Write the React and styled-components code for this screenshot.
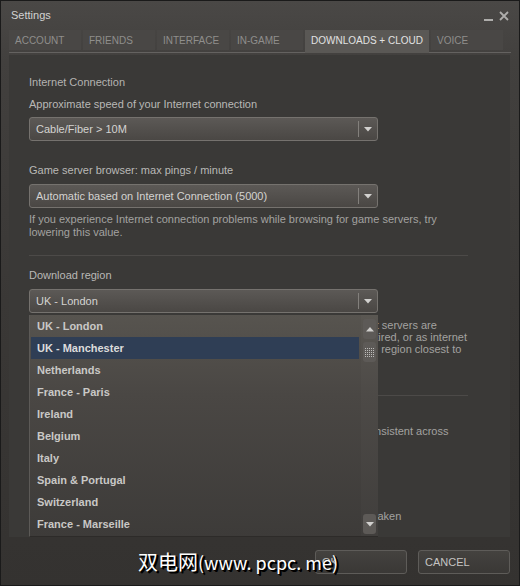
import React from "react";
import styled, { createGlobalStyle } from "styled-components";

const Global = createGlobalStyle`
  html, body { margin: 0; padding: 0; background: #1e1e1e; }
  body { font-family: Arial, "Liberation Sans", sans-serif; }
  * { box-sizing: border-box; }
`;

const Window = styled.div`
  position: relative;
  width: 520px;
  height: 586px;
  display: flex;
  flex-direction: column;
  background: linear-gradient(#4a4846 0px, #42403e 60px, #3a3836 300px, #343230 586px);
  border: 1px solid #1a1a1a;
  font-family: Arial, "Liberation Sans", sans-serif;
  overflow: hidden;
`;

const TitleBar = styled.div`
  height: 28px;
  display: flex;
  align-items: center;
  justify-content: space-between;
  padding: 0 10px 0 10px;
`;

const Title = styled.div`
  color: #d2d2d2;
  font-size: 11px;
`;

const Controls = styled.div`
  display: flex;
  align-items: center;
  gap: 6px;
  margin-top: 2px;
`;

const Tabs = styled.div`
  display: flex;
  gap: 2px;
  margin: 1px 8px 0 8px;
  border-bottom: 1px solid #646260;
  height: 23px;
`;

const Tab = styled.div`
  width: ${p => p.$w}px;
  height: ${p => (p.$active ? 23 : 20)}px;
  display: flex;
  align-items: center;
  padding-left: 6px;
  padding-bottom: ${p => (p.$active ? 2 : 0)}px;
  font-size: 10px;
  color: ${p => (p.$active ? "#e2e2e2" : "#8f8e8c")};
  background: ${p => (p.$active ? "#5a5855" : "#494745")};
  white-space: nowrap;
`;

const Panel = styled.div`
  flex: 1;
  margin: 2px 9px 0 8px;
  background: #3a3937;
  padding: 20px 42px 0 20px;
  display: flex;
  flex-direction: column;
`;

const SectionTitle = styled.div`
  font-size: 11px;
  line-height: 14px;
  color: #b4b3b1;
  margin-bottom: 8px;
`;

const Label = styled.div`
  font-size: 11px;
  line-height: 14px;
  color: #b9b8b6;
  margin-top: ${p => p.$mt || 0}px;
  margin-bottom: ${p => p.$mb ?? 6}px;
`;

const Select = styled.div`
  width: 349px;
  height: 24px;
  border: 1px solid #75726e;
  border-radius: 3px;
  background: linear-gradient(#5c5956, #4a4744);
  display: flex;
  align-items: center;
  color: #d4d3d1;
  font-size: 11px;
  padding-left: 6px;
`;

const SelectText = styled.span`
  flex: 1;
`;

const ArrowBox = styled.div`
  width: 19px;
  height: 16px;
  border-left: 1px solid #83807c;
  display: flex;
  align-items: center;
  justify-content: center;
`;

const Help = styled.div`
  font-size: 11px;
  line-height: ${p => p.$lh || 13}px;
  color: #a3a2a0;
  margin-top: ${p => p.$mt || 0}px;
  white-space: ${p => (p.$nowrap ? "nowrap" : "normal")};
`;

const Divider = styled.div`
  height: 1px;
  background: #4c4a48;
  margin-top: ${p => p.$mt}px;
`;

const RegionWrap = styled.div`
  position: relative;
  width: 349px;
`;

const List = styled.div`
  position: absolute;
  left: 0;
  top: 26px;
  width: 349px;
  height: 222px;
  background: linear-gradient(#57544f 0px, #4a4744 80px, #3d3b39 222px);
  border-left: 1px solid #5c5a57;
  border-bottom: 1px solid #2d2b29;
  z-index: 2;
  display: flex;
`;

const Items = styled.div`
  flex: 1;
  padding-left: 1px;
`;

const Item = styled.div`
  height: 22px;
  display: flex;
  align-items: center;
  padding-left: 6px;
  font-size: 11px;
  font-weight: bold;
  color: ${p => (p.$sel ? "#dcdcdc" : "#c9c8c6")};
  background: ${p => (p.$sel ? "#2f3e55" : "transparent")};
  margin-right: 2px;
`;

const ScrollCol = styled.div`
  width: 17px;
  display: flex;
  flex-direction: column;
  align-items: center;
  padding: 4px 0 2px;
  background: rgba(255, 255, 255, 0.02);
`;

const ScrollBtn = styled.div`
  width: 13px;
  height: 20px;
  border-radius: 3px;
  background: #5d5a57;
  display: flex;
  align-items: center;
  justify-content: center;
  margin-top: ${p => p.$mt || 0}px;
`;

const Spacer = styled.div`
  flex: 1;
`;

const Footer = styled.div`
  height: 48px;
  display: flex;
  align-items: center;
  justify-content: flex-end;
  gap: 11px;
  padding: 2px 9px 0 0;
`;

const Button = styled.div`
  width: 92px;
  height: 24px;
  border: 1px solid #5e5c59;
  border-radius: 3px;
  background: linear-gradient(#44423f, #3a3836);
  color: #c5c4c2;
  font-size: 11px;
  display: flex;
  align-items: center;
  padding-left: 6px;
`;

const Watermark = styled.div`
  position: absolute;
  left: 137px;
  top: 548px;
  font-family: "Noto Sans CJK SC", "DejaVu Sans", sans-serif;
  font-size: 20px;
  line-height: 26px;
  color: #ffffff;
  text-shadow: 2px 2px 0 #000, 1px 1px 0 #000, 2px 1px 0 #000;
  white-space: nowrap;
  z-index: 5;
`;

const Latin = styled.span`
  font-size: 18px;
`;

const Caret = () => (
  <svg width="8" height="5" viewBox="0 0 8 5">
    <path d="M0 0 H8 L4 4.5 Z" fill="#d2d1cf" />
  </svg>
);

const regions = [
  "UK - London",
  "UK - Manchester",
  "Netherlands",
  "France - Paris",
  "Ireland",
  "Belgium",
  "Italy",
  "Spain & Portugal",
  "Switzerland",
  "France - Marseille",
];

const tabs = [
  ["ACCOUNT", 72],
  ["FRIENDS", 72],
  ["INTERFACE", 72],
  ["IN-GAME", 72],
  ["DOWNLOADS + CLOUD", 124],
  ["VOICE", 72],
];

export default function App() {
  return (
    <>
      <Global />
      <Window>
        <TitleBar>
          <Title>Settings</Title>
          <Controls>
            <svg width="9" height="10" viewBox="0 0 9 10">
              <rect x="0" y="8" width="9" height="2" fill="#aeadab" />
            </svg>
            <svg width="10" height="10" viewBox="0 0 10 10">
              <path d="M1 1 L9 9 M9 1 L1 9" stroke="#aeadab" strokeWidth="1.8" />
            </svg>
          </Controls>
        </TitleBar>
        <Tabs>
          {tabs.map(([t, w]) => (
            <Tab key={t} $w={w} $active={t === "DOWNLOADS + CLOUD"}>
              {t}
            </Tab>
          ))}
        </Tabs>
        <Panel>
          <SectionTitle>Internet Connection</SectionTitle>
          <Label>Approximate speed of your Internet connection</Label>
          <Select>
            <SelectText>Cable/Fiber &gt; 10M</SelectText>
            <ArrowBox><Caret /></ArrowBox>
          </Select>
          <Label $mt={22} $mb={7}>Game server browser: max pings / minute</Label>
          <Select>
            <SelectText>Automatic based on Internet Connection (5000)</SelectText>
            <ArrowBox><Caret /></ArrowBox>
          </Select>
          <Help $mt={5}>
            If you experience Internet connection problems while browsing for game servers, try
            lowering this value.
          </Help>
          <Divider $mt={16} />
          <Label $mt={12} $mb={7}>Download region</Label>
          <RegionWrap>
            <Select>
              <SelectText>UK - London</SelectText>
              <ArrowBox><Caret /></ArrowBox>
            </Select>
            <List>
              <Items>
                {regions.map((r, i) => (
                  <Item key={r} $sel={i === 1}>{r}</Item>
                ))}
              </Items>
              <ScrollCol>
                <ScrollBtn>
                  <svg width="8" height="5" viewBox="0 0 8 5">
                    <path d="M0 4.5 H8 L4 0 Z" fill="#cfcecc" />
                  </svg>
                </ScrollBtn>
                <ScrollBtn $mt={3}>
                  <svg width="9" height="9" viewBox="0 0 9 9">
                    {[0, 2, 4, 6, 8].map(y =>
                      [0, 2, 4, 6, 8].map(x => (
                        <rect key={x + "-" + y} x={x} y={y} width="1" height="1" fill="#bdbcba" />
                      ))
                    )}
                  </svg>
                </ScrollBtn>
                <Spacer />
                <ScrollBtn>
                  <Caret />
                </ScrollBtn>
              </ScrollCol>
            </List>
          </RegionWrap>
          <Help $mt={6} $lh={12} $nowrap>
            Steam automatically selects the best download region, but if the content servers are
            <br />
            overloaded, a different region can be chosen manually, if servers are retired, or as internet
            <br />
            routing changes, you might see better speeds by manually selecting the region closest to
          </Help>
          <Divider $mt={40} />
          <Label $mt={9}>Content Libraries</Label>
          <Help $nowrap>
            Manage your content locations on multiple drives, to keep all installs consistent across
          </Help>
          <Help $mt={72} $nowrap>
            Clearing the download cache may fix problems, but some time may be taken
          </Help>
        </Panel>
        <Footer>
          <Button>OK</Button>
          <Button>CANCEL</Button>
        </Footer>
        <Watermark>
          双电网<Latin>(www. pcpc. me)</Latin>
        </Watermark>
      </Window>
    </>
  );
}
